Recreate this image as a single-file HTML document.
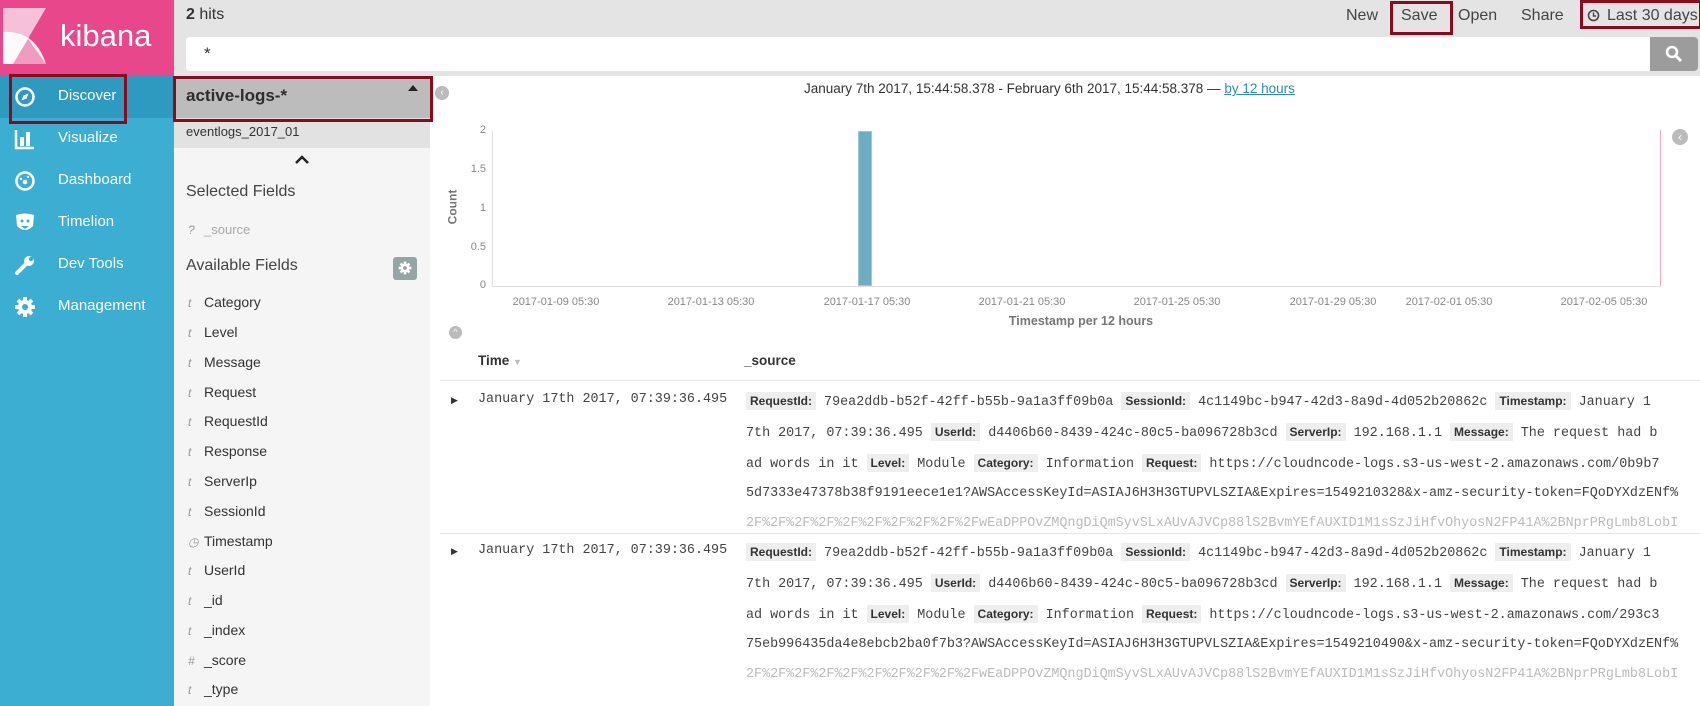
<!DOCTYPE html>
<html><head><meta charset="utf-8"><style>
*{margin:0;padding:0;box-sizing:border-box}
body{width:1700px;height:706px;overflow:hidden;background:#fff;font-family:"Liberation Sans",sans-serif;position:relative;color:#333}
.a{position:absolute;white-space:nowrap}
.nav{position:absolute;left:0;width:174px;height:42px;color:#fff;font-size:15px}
.nav span{position:absolute;left:58px;top:12px}
.nav svg{position:absolute;left:14px;top:11px}
.fld{position:absolute;left:188px;font-size:14px;color:#333}
.fld i{color:#999;font-size:12px;margin-right:10px;display:inline-block;width:6px}
.tick{position:absolute;top:296px;font-size:11px;color:#888;transform:translateX(-50%)}
.doc{position:absolute;left:746px;width:936px;font-family:"Liberation Mono",monospace;font-size:13.4px;color:#444;line-height:29.8px;white-space:nowrap;overflow:hidden}
.doc b{background:#eee;font-family:"Liberation Sans",sans-serif;font-size:12px;padding:2px 4px;color:#333}
.ytk{position:absolute;left:470px;font-size:11px;color:#888;text-align:right;width:16px}
</style></head><body>
<div class="a" style="left:0;top:0;width:174px;height:706px;background:#3caed2"></div>
<div class="a" style="left:0;top:0;width:174px;height:75px;background:#e8488b"></div>
<svg class="a" style="left:3px;top:8px" width="45" height="58" viewBox="0 0 45 58"><polygon points="0,0 43,0 10,56 0,56" fill="#f6c1d8"/><path d="M0,24 Q32,22 43,56 L0,56Z" fill="#fff" opacity=".9"/><polygon points="10,56 25,31 43,56" fill="#f09cc0"/></svg>
<div class="a" style="left:60px;top:18px;font-size:31px;color:#fff">kibana</div>
<div class="a" style="left:0;top:75px;width:174px;height:43px;background:#2e9ac0"></div>
<div class="nav" style="top:75px"><svg width="22" height="22" viewBox="0 0 22 22"><circle cx="11" cy="11" r="8.5" fill="none" stroke="#fff" stroke-width="2.5"/><path d="M14.5 7.5L12.5 12.5 7.5 14.5 9.5 9.5Z" fill="#fff"/></svg><span>Discover</span></div>
<div class="nav" style="top:117px"><svg width="22" height="22"><path d="M2 2v18h18" stroke="#fff" stroke-width="2.5" fill="none"/><rect x="6" y="9" width="4" height="9" fill="#fff"/><rect x="12" y="4" width="4" height="14" fill="#fff"/></svg><span>Visualize</span></div>
<div class="nav" style="top:159px"><svg width="22" height="22"><circle cx="11" cy="11" r="8.5" fill="none" stroke="#fff" stroke-width="2.5"/><circle cx="11" cy="12" r="2.3" fill="#fff"/><circle cx="7" cy="9" r="1.2" fill="#fff"/><circle cx="14" cy="7" r="1.2" fill="#fff"/></svg><span>Dashboard</span></div>
<div class="nav" style="top:201px"><svg width="22" height="22"><path d="M2 3Q11 0 20 3L19 14Q11 22 3 14Z" fill="#fff"/><circle cx="8" cy="9" r="1.5" fill="#3caed2"/><circle cx="14" cy="9" r="1.5" fill="#3caed2"/><path d="M7 14h8l-4 3z" fill="#3caed2"/></svg><span>Timelion</span></div>
<div class="nav" style="top:243px"><svg width="22" height="22"><path d="M3 19L12 10" stroke="#fff" stroke-width="4" stroke-linecap="round"/><circle cx="15" cy="7" r="5" fill="#fff"/><circle cx="17" cy="5" r="2.2" fill="#3caed2"/></svg><span>Dev Tools</span></div>
<div class="nav" style="top:285px"><svg width="22" height="22" viewBox="0 0 22 22"><circle cx="11" cy="11" r="7" fill="#fff"/><g stroke="#fff" stroke-width="4"><path d="M11 1v20M1 11h20M4 4l14 14M18 4L4 18"/></g><circle cx="11" cy="11" r="3" fill="#3caed2"/></svg><span>Management</span></div>
<div class="a" style="left:9px;top:74px;width:118px;height:50px;border:3px solid #8b0b1e"></div>
<div class="a" style="left:174px;top:0;width:1526px;height:76px;background:#e4e4e4"></div>
<div class="a" style="left:186px;top:6px;font-size:16px;color:#333"><b>2</b> hits</div>
<div class="a" style="left:186px;top:37px;width:1464px;height:34px;background:#fff;border-radius:4px 0 0 4px"></div>
<div class="a" style="left:204px;top:44px;font-size:17px">*</div>
<div class="a" style="left:1650px;top:37px;width:48px;height:34px;background:#9c9c9c;border-radius:0 4px 4px 0"></div>
<svg class="a" style="left:1665px;top:45px" width="18" height="18"><circle cx="7" cy="7" r="5" fill="none" stroke="#fff" stroke-width="2.5"/><path d="M11 11l5 5" stroke="#fff" stroke-width="3"/></svg>
<div class="a" style="left:1346px;top:7px;font-size:16px;color:#444">New</div>
<div class="a" style="left:1390px;top:1px;width:63px;height:34px;border:3px solid #8b0b1e"></div>
<div class="a" style="left:1401px;top:7px;font-size:16px;color:#444">Save</div>
<div class="a" style="left:1458px;top:7px;font-size:16px;color:#444">Open</div>
<div class="a" style="left:1521px;top:7px;font-size:16px;color:#444">Share</div>
<div class="a" style="left:1580px;top:0;width:122px;height:29px;border:3px solid #8b0b1e"></div>
<svg class="a" style="left:1587px;top:9px" width="13" height="13"><circle cx="6.5" cy="6.5" r="5" fill="none" stroke="#444" stroke-width="1.6"/><path d="M6.5 3.5v3.5h2.5" stroke="#444" stroke-width="1.4" fill="none"/></svg>
<div class="a" style="left:1607px;top:7px;font-size:16px;color:#444">Last 30 days</div>
<div class="a" style="left:174px;top:76px;width:256px;height:630px;background:#f5f5f5"></div>
<div class="a" style="left:174px;top:76px;width:256px;height:42px;background:#bcbcbc"></div>
<div class="a" style="left:174px;top:118px;width:256px;height:30px;background:#e2e2e2"></div>
<div class="a" style="left:186px;top:86px;font-size:17px;font-weight:bold;color:#2d2d2d">active-logs-*</div>
<div class="a" style="left:408px;top:85px;width:0;height:0;border:5px solid transparent;border-bottom:6px solid #222;border-top:none"></div>
<div class="a" style="left:173px;top:76px;width:260px;height:46px;border:3px solid #8b0b1e"></div>
<div class="a" style="left:186px;top:124px;font-size:13px;color:#333">eventlogs_2017_01</div>
<svg class="a" style="left:295px;top:155px" width="14" height="10"><path d="M1 8l6-6 6 6" stroke="#222" stroke-width="2.5" fill="none"/></svg>
<div class="a" style="left:186px;top:183px;font-size:16px;color:#444">Selected Fields</div>
<div class="fld" style="top:222px;color:#aaa;font-size:13px"><i>?</i>_source</div>
<div class="a" style="left:186px;top:257px;font-size:16px;color:#444">Available Fields</div>
<div class="a" style="left:393px;top:257px;width:24px;height:23px;background:#95a5a6;border-radius:3px"></div>
<svg class="a" style="left:398px;top:261px" width="14" height="14" viewBox="0 0 22 22"><circle cx="11" cy="11" r="7" fill="#fff"/><g stroke="#fff" stroke-width="4"><path d="M11 1v20M1 11h20M4 4l14 14M18 4L4 18"/></g><circle cx="11" cy="11" r="3" fill="#95a5a6"/></svg>
<div class="fld" style="top:294px"><i>t</i>Category</div>
<div class="fld" style="top:324px"><i>t</i>Level</div>
<div class="fld" style="top:354px"><i>t</i>Message</div>
<div class="fld" style="top:384px"><i>t</i>Request</div>
<div class="fld" style="top:413px"><i>t</i>RequestId</div>
<div class="fld" style="top:443px"><i>t</i>Response</div>
<div class="fld" style="top:473px"><i>t</i>ServerIp</div>
<div class="fld" style="top:503px"><i>t</i>SessionId</div>
<div class="fld" style="top:533px"><i>◷</i>Timestamp</div>
<div class="fld" style="top:562px"><i>t</i>UserId</div>
<div class="fld" style="top:592px"><i>t</i>_id</div>
<div class="fld" style="top:622px"><i>t</i>_index</div>
<div class="fld" style="top:652px"><i>#</i>_score</div>
<div class="fld" style="top:681px"><i>t</i>_type</div>
<div class="a" style="left:435px;top:86px;width:14px;height:14px;border-radius:50%;background:#bbb;color:#fff;font-size:10px;line-height:14px;text-align:center">‹</div>
<div class="a" style="left:1672px;top:129px;width:16px;height:16px;border-radius:50%;background:#bbb;color:#fff;font-size:12px;line-height:16px;text-align:center">‹</div>
<div class="a" style="left:1660px;top:130px;width:1px;height:156px;background:#f1a9b5"></div>
<div class="a" style="left:804px;top:81px;font-size:13.5px;color:#333">January 7th 2017, 15:44:58.378 - February 6th 2017, 15:44:58.378 — <span style="color:#2f8ab8;text-decoration:underline">by 12 hours</span></div>
<div class="a" style="left:492px;top:131px;width:1px;height:155px;background:#ddd"></div>
<div class="a" style="left:492px;top:286px;width:1168px;height:1px;background:#ddd"></div>
<div class="ytk" style="top:124px">2</div><div class="ytk" style="top:163px">1.5</div><div class="ytk" style="top:202px">1</div><div class="ytk" style="top:241px">0.5</div><div class="ytk" style="top:279px">0</div>
<div class="a" style="left:435px;top:200px;font-size:12px;font-weight:bold;color:#777;transform:rotate(-90deg);transform-origin:center">Count</div>
<div class="a" style="left:858px;top:131px;width:14px;height:155px;background:#6eadc1;border:1px solid #9cc7d4"></div>
<div class="tick" style="left:556px">2017-01-09 05:30</div>
<div class="tick" style="left:711px">2017-01-13 05:30</div>
<div class="tick" style="left:867px">2017-01-17 05:30</div>
<div class="tick" style="left:1022px">2017-01-21 05:30</div>
<div class="tick" style="left:1177px">2017-01-25 05:30</div>
<div class="tick" style="left:1333px">2017-01-29 05:30</div>
<div class="tick" style="left:1449px">2017-02-01 05:30</div>
<div class="tick" style="left:1604px">2017-02-05 05:30</div>
<div class="a" style="left:1081px;top:314px;transform:translateX(-50%);font-size:12.5px;font-weight:bold;color:#777">Timestamp per 12 hours</div>
<div class="a" style="left:449px;top:326px;width:13px;height:13px;border-radius:50%;background:#bbb;color:#fff;font-size:9px;line-height:13px;text-align:center">^</div>
<div class="a" style="left:478px;top:353px;font-size:13.5px;font-weight:bold;color:#333">Time <span style="color:#bbb;font-size:9px">▼</span></div>
<div class="a" style="left:744px;top:353px;font-size:13.5px;font-weight:bold;color:#333">_source</div>
<div class="a" style="left:440px;top:380px;width:1260px;height:1px;background:#e6e6e6"></div>
<div class="a" style="left:440px;top:533px;width:1260px;height:1px;background:#e6e6e6"></div>
<div class="a" style="left:451px;top:395px;font-size:9px">▶</div>
<div class="a" style="left:451px;top:546px;font-size:9px">▶</div>
<div class="a" style="left:478px;top:392px;font-family:'Liberation Mono',monospace;font-size:13.4px;color:#444">January 17th 2017, 07:39:36.495</div>
<div class="a" style="left:478px;top:543px;font-family:'Liberation Mono',monospace;font-size:13.4px;color:#444">January 17th 2017, 07:39:36.495</div>
<div class="doc" style="top:387px;height:144px">
<div><b>RequestId:</b> 79ea2ddb-b52f-42ff-b55b-9a1a3ff09b0a <b>SessionId:</b> 4c1149bc-b947-42d3-8a9d-4d052b20862c <b>Timestamp:</b> January 1</div>
<div>7th 2017, 07:39:36.495 <b>UserId:</b> d4406b60-8439-424c-80c5-ba096728b3cd <b>ServerIp:</b> 192.168.1.1 <b>Message:</b> The request had b</div>
<div>ad words in it <b>Level:</b> Module <b>Category:</b> Information <b>Request:</b> https://cloudncode-logs.s3-us-west-2.amazonaws.com/0b9b7</div>
<div>5d7333e47378b38f9191eece1e1?AWSAccessKeyId=ASIAJ6H3H3GTUPVLSZIA&amp;Expires=1549210328&amp;x-amz-security-token=FQoDYXdzENf%</div>
<div style="color:#bbb">2F%2F%2F%2F%2F%2F%2F%2F%2F%2FwEaDPPOvZMQngDiQmSyvSLxAUvAJVCp88lS2BvmYEfAUXID1M1sSzJiHfvOhyosN2FP41A%2BNprPRgLmb8LobI</div>
</div>
<div class="doc" style="top:538px;height:144px">
<div><b>RequestId:</b> 79ea2ddb-b52f-42ff-b55b-9a1a3ff09b0a <b>SessionId:</b> 4c1149bc-b947-42d3-8a9d-4d052b20862c <b>Timestamp:</b> January 1</div>
<div>7th 2017, 07:39:36.495 <b>UserId:</b> d4406b60-8439-424c-80c5-ba096728b3cd <b>ServerIp:</b> 192.168.1.1 <b>Message:</b> The request had b</div>
<div>ad words in it <b>Level:</b> Module <b>Category:</b> Information <b>Request:</b> https://cloudncode-logs.s3-us-west-2.amazonaws.com/293c3</div>
<div>75eb996435da4e8ebcb2ba0f7b3?AWSAccessKeyId=ASIAJ6H3H3GTUPVLSZIA&amp;Expires=1549210490&amp;x-amz-security-token=FQoDYXdzENf%</div>
<div style="color:#bbb">2F%2F%2F%2F%2F%2F%2F%2F%2F%2FwEaDPPOvZMQngDiQmSyvSLxAUvAJVCp88lS2BvmYEfAUXID1M1sSzJiHfvOhyosN2FP41A%2BNprPRgLmb8LobI</div>
</div>
</body></html>
